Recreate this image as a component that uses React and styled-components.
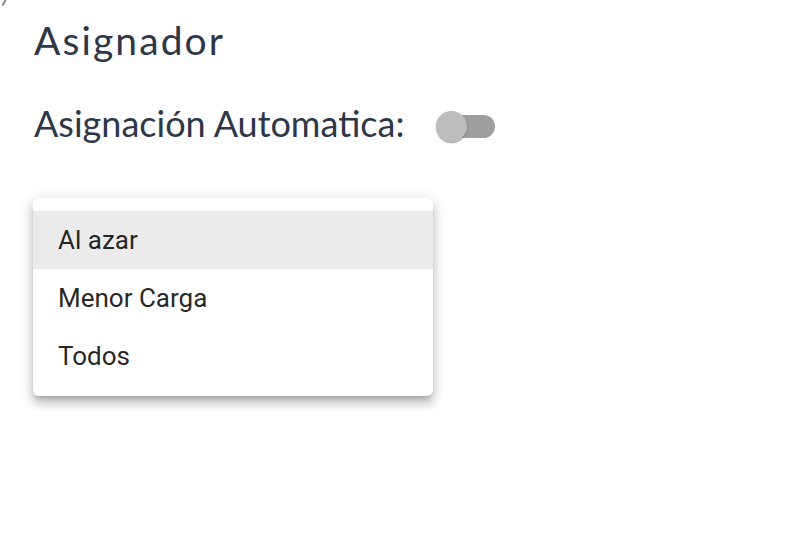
import React from "react";
import styled, { createGlobalStyle } from "styled-components";

const Global = createGlobalStyle`
  html, body { margin: 0; padding: 0; background: #ffffff; }
  body { font-family: "Lato", "Noto Sans", sans-serif; }
`;

const Page = styled.div`
  position: relative;
  width: 786px;
  height: 548px;
  overflow: hidden;
  background: #fff;
  padding: 17px 0 0 34px;
  box-sizing: border-box;
`;

const CornerMark = styled.div`
  position: absolute;
  left: -4px;
  top: -4px;
  width: 8px;
  height: 8px;
  border-right: 2px solid #8a8a8a;
  transform: rotate(30deg);
`;

const Title = styled.h1`
  margin: 0;
  font-family: "Lato", sans-serif;
  font-weight: 400;
  font-size: 39px;
  line-height: 46px;
  letter-spacing: 2.1px;
  color: #2d3748;
`;

const Row = styled.div`
  display: flex;
  align-items: center;
  gap: 32px;
  margin-top: 40px;
  height: 40px;
`;

const Label = styled.span`
  font-family: "Lato", sans-serif;
  font-size: 36px;
  line-height: 40px;
  color: #2d3748;
`;

const Switch = styled.span`
  position: relative;
  display: inline-block;
  flex: none;
  width: 59px;
  height: 32px;
  margin-top: 7px;
`;

const Track = styled.span`
  position: absolute;
  left: 7px;
  right: 0;
  top: 4px;
  height: 23px;
  border-radius: 12px;
  background: #9e9e9e;
`;

const Thumb = styled.span`
  position: absolute;
  left: 0;
  top: 0;
  width: 31px;
  height: 31px;
  border-radius: 50%;
  background: #bdbdbd;
  box-shadow: 0 2px 1px -1px rgba(0,0,0,0.2), 0 1px 1px 0 rgba(0,0,0,0.14), 0 1px 3px 0 rgba(0,0,0,0.12);
`;

const Menu = styled.ul`
  list-style: none;
  margin: 55px 0 0 -1px;
  padding: 13px 0 11px;
  width: 400px;
  background: #fff;
  border-radius: 6px;
  box-shadow: 0px 5px 5px -3px rgba(0,0,0,0.2), 0px 8px 10px 1px rgba(0,0,0,0.14), 0px 3px 14px 2px rgba(0,0,0,0.12);
`;

const Item = styled.li`
  height: 58px;
  display: flex;
  align-items: center;
  padding: 0 25px;
  font-family: "Roboto", sans-serif;
  font-size: 26px;
  color: rgba(0,0,0,0.87);
  background: ${(p) => (p.$selected ? "#ebebeb" : "transparent")};
`;

const options = ["Al azar", "Menor Carga", "Todos"];

export default function App() {
  return (
    <>
      <Global />
      <Page>
        <CornerMark />
        <Title>Asignador</Title>
        <Row>
          <Label>Asignación Automatica:</Label>
          <Switch>
            <Track />
            <Thumb />
          </Switch>
        </Row>
        <Menu>
          {options.map((o, i) => (
            <Item key={o} $selected={i === 0}>{o}</Item>
          ))}
        </Menu>
      </Page>
    </>
  );
}
